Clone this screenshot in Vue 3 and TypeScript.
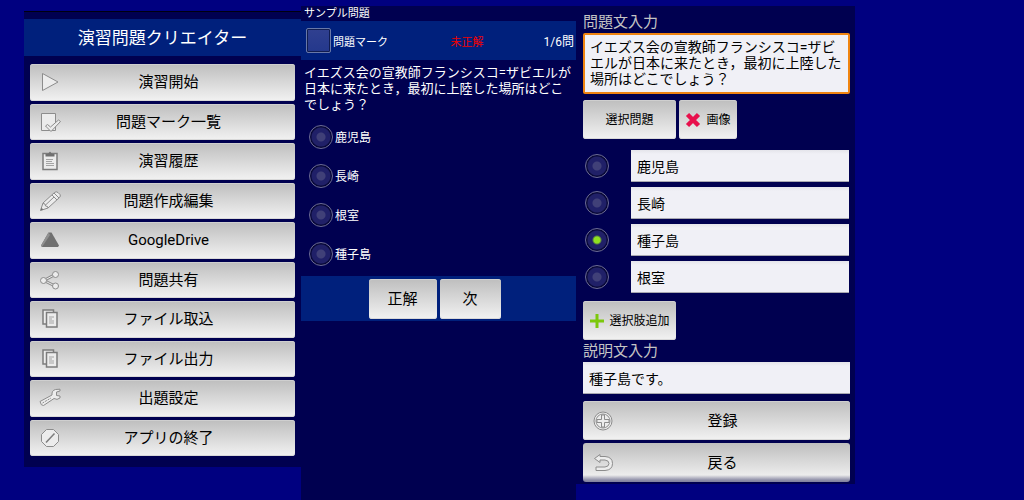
<script setup lang="ts">
import { ref } from 'vue'

interface MenuItem {
  label: string
  icon: string
}

const menu: MenuItem[] = [
  { label: '演習開始', icon: 'play' },
  { label: '問題マーク一覧', icon: 'mark' },
  { label: '演習履歴', icon: 'clipboard' },
  { label: '問題作成編集', icon: 'pencil' },
  { label: 'GoogleDrive', icon: 'drive' },
  { label: '問題共有', icon: 'share' },
  { label: 'ファイル取込', icon: 'files' },
  { label: 'ファイル出力', icon: 'files' },
  { label: '出題設定', icon: 'wrench' },
  { label: 'アプリの終了', icon: 'exit' },
]

const question = 'イエズス会の宣教師フランシスコ=ザビエルが日本に来たとき，最初に上陸した場所はどこでしょう？'
const answers: string[] = ['鹿児島', '長崎', '根室', '種子島']

const marked = ref(false)
const picked = ref<string | null>(null)
const draft = ref(question)
const choices = ref<string[]>(['鹿児島', '長崎', '種子島', '根室'])
const correct = ref(2)
const explanation = ref('種子島です。')
</script>

<template>
  <div class="page">
    <section class="panel menu">
      <h1 class="menu-title">演習問題クリエイター</h1>
      <nav class="menu-list">
        <button v-for="item in menu" :key="item.label" type="button" class="btn wide">
          <svg class="icon" viewBox="0 0 24 24" aria-hidden="true">
            <g v-if="item.icon === 'play'">
              <path class="light" d="M4.500 3.500V20.500L20 12Z" />
            </g>
            <g v-else-if="item.icon === 'mark'">
              <path class="light" d="M3.500 3.500H17.500V20.500H3.500Z" />
              <path class="light" d="M7.500 16l2-1.500 3 2.500L20.500 10l2 1.500L13 21.500Z" />
            </g>
            <g v-else-if="item.icon === 'clipboard'">
              <path class="light heavy" d="M5 4.500H19V20.500H5Z" />
              <path class="dark" d="M7.500 7.500V5H10L12 2.500l2 2.500h2.500V7.500Z" />
              <path class="thin" d="M8 10.500h7M8 12.500h6M8 14.500h8M8 16.500h8" />
            </g>
            <g v-else-if="item.icon === 'pencil'">
              <path class="light" d="M2.500 21.500L5 14 16.500 3.500Q18 2 20 3.500L22 5.500Q23 7 21.500 8.500L10 19Z" />
              <path class="line" d="M5 14.500L7 15l.5 2 2 .5.5 1.500M14 6l5 5M16 4l5 5M7.500 16L16 8" />
              <path class="dark" d="M2.500 21.500l1-2.800 1.800 1.800Z" />
            </g>
            <g v-else-if="item.icon === 'drive'">
              <path class="slab" d="M10.500 4.500H13.500L21 17.500 20 19H4L3 17.500Z" />
              <path class="shine" d="M10.500 4.500L3 17.500 4 19 12 7Z" />
            </g>
            <g v-else-if="item.icon === 'share'">
              <path class="rod" d="M6 12.500L17 6.500M6 12.500L17 18" />
              <path class="rod-in" d="M6 12.500L17 6.500M6 12.500L17 18" />
              <circle class="light" cx="5.500" cy="12.500" r="3" />
              <circle class="light" cx="17.500" cy="6.500" r="3" />
              <circle class="light" cx="17.500" cy="18" r="3" />
            </g>
            <g v-else-if="item.icon === 'files'">
              <path class="light heavy" d="M5 3H15.500V17H5Z" />
              <path class="light heavy" d="M8.500 5.500H19V20H8.500Z" />
              <path class="thin" d="M11 10h5M11 12h3M11 14h5M11 16h5" />
            </g>
            <g v-else-if="item.icon === 'wrench'">
              <path class="light" d="M2 15.500L14 9Q13.500 4.500 17.500 3.500L22 3.200V5L18.500 6V9.500L22 10V12Q19 14.500 16 12.500L5.500 19.500Q3 20 2 15.500Z" />
              <path class="line" d="M4.500 17L13 12" stroke-width="2" stroke-dasharray="2 1" />
            </g>
            <g v-else>
              <path class="light" d="M8.500 3.500h7l5 5v7l-5 5h-7l-5-5v-7Z" />
              <path class="line heavy" d="M8 16.500L16.500 7.500" />
            </g>
          </svg>
          <span>{{ item.label }}</span>
        </button>
      </nav>
    </section>

    <section class="panel quiz">
      <h2 class="quiz-title">サンプル問題</h2>
      <div class="quiz-bar">
        <label class="mark"><input v-model="marked" type="checkbox" class="check" />問題マーク</label>
        <span class="state">未正解</span>
        <span class="count">1/6問</span>
      </div>
      <p class="question">{{ question }}</p>
      <div class="answers">
        <label v-for="a in answers" :key="a" class="answer">
          <input v-model="picked" type="radio" name="answer" class="radio" :value="a" />
          <span class="answer-text">{{ a }}</span>
        </label>
      </div>
      <div class="quiz-actions">
        <button type="button" class="btn reveal">正解</button>
        <button type="button" class="btn next">次</button>
      </div>
    </section>

    <section class="panel editor">
      <label class="heading" for="draft">問題文入力</label>
      <textarea id="draft" v-model="draft" class="draft" rows="3"></textarea>
      <div class="tools">
        <button type="button" class="btn tool kind">選択問題</button>
        <button type="button" class="btn tool picture">
          <svg class="glyph" viewBox="0 0 16 16" aria-hidden="true">
            <path d="M2.500 2.500L13.500 13.500M13.500 2.500L2.500 13.500" stroke="#e8104c" stroke-width="4.500" />
          </svg>
          <span>画像</span>
        </button>
      </div>
      <div class="choices">
        <div v-for="(c, i) in choices" :key="i" class="choice">
          <input v-model="correct" type="radio" name="correct" class="radio" :value="i" :aria-label="'正解 ' + (i + 1)" />
          <input v-model="choices[i]" type="text" class="field" :aria-label="'選択肢 ' + (i + 1)" />
        </div>
      </div>
      <div class="adder">
        <button type="button" class="btn tool add">
          <svg class="glyph" viewBox="0 0 16 16" aria-hidden="true">
            <path d="M8 1V15M1 8H15" stroke="#7cc80c" stroke-width="3" />
          </svg>
          <span>選択肢追加</span>
        </button>
      </div>
      <label class="heading" for="explanation">説明文入力</label>
      <input id="explanation" v-model="explanation" type="text" class="field note" />
      <div class="submit">
        <button type="button" class="btn wide">
          <svg class="icon" viewBox="0 0 24 24" aria-hidden="true">
            <circle class="light" cx="12" cy="12" r="9" />
            <circle class="line" cx="12" cy="12" r="7" />
            <path class="light" d="M10.500 6h3v4.500H18v3h-4.500V18h-3v-4.500H6v-3h4.500Z" />
          </svg>
          <span>登録</span>
        </button>
        <button type="button" class="btn wide last">
          <svg class="icon" viewBox="0 0 24 24" aria-hidden="true">
            <path class="light" d="M3.500 7.500L9 3.500V5.500H14Q21.500 6 21.500 12.500T14 19.500H5V16H14Q18 15.500 18 12.500T14 9H9V11.500Z" />
          </svg>
          <span>戻る</span>
        </button>
      </div>
    </section>
  </div>
</template>

<style>
html,
body {
  background: #000080;
}
</style>

<style scoped>
.page {
  box-sizing: border-box;
  min-height: 100vh;
  padding: 6px 169px 0 24px;
  display: grid;
  grid-template-columns: 277fr 275fr 279fr;
  align-items: start;
  background: #000080;
  font-family: Roboto, "Noto Sans CJK JP", sans-serif;
  color: #fff;
}

.page * {
  box-sizing: border-box;
}

h1,
h2,
p {
  margin: 0;
  font-weight: 400;
}

button,
input,
textarea {
  margin: 0;
  font-family: inherit;
}

.panel {
  min-width: 0;
  background: #000050;
}

.btn {
  border: 0;
  border-radius: 3px;
  padding: 0;
  display: flex;
  align-items: center;
  justify-content: center;
  color: #000;
  background: linear-gradient(#bebebe, #f2f2f2);
  box-shadow: inset 0 1px 0 #cfcfcf, inset 0 -1px 0 #d8d8d8;
  font-size: 15px;
  line-height: 20px;
}

.wide {
  position: relative;
  width: 100%;
  padding-left: 12px;
}

.icon {
  position: absolute;
  left: 8px;
  width: 24px;
  height: 24px;
}

.light {
  fill: #ececec;
  stroke: #8c8c8c;
  stroke-width: 1;
}

.line,
.thin {
  fill: none;
  stroke: #8c8c8c;
  stroke-width: 1;
}

.thin {
  stroke: #a4a4a4;
}

.heavy {
  stroke: #7c7c7c;
  stroke-width: 1.5;
}

.dark {
  fill: #707070;
}

.slab {
  fill: #707070;
}

.shine {
  fill: #909090;
}

.rod {
  stroke: #8c8c8c;
  stroke-width: 3;
}

.rod-in {
  stroke: #ececec;
  stroke-width: 1;
}

/* menu */
.menu {
  margin-top: 5px;
  padding: 7px 0 11px;
  border-top: 1px solid #000010;
}

.menu-title {
  padding: 7px 0 5px;
  background: #00207c;
  font-size: 17px;
  line-height: 25px;
  text-align: center;
}

.menu-list {
  min-height: 392px;
  margin: 8px 6px 0;
  display: grid;
  grid-auto-rows: 1fr;
  gap: 3px;
}

/* quiz */
.quiz {
  min-height: calc(100vh - 6px);
}

.quiz-title {
  padding: 1px 3px 0;
  font-size: 11px;
  line-height: 14px;
}

.quiz-bar {
  height: 39px;
  padding: 0 2px 0 5px;
  display: grid;
  grid-template-columns: 1fr auto 1fr;
  align-items: center;
  background: #00207c;
  font-size: 11px;
}

.mark {
  display: flex;
  align-items: center;
  gap: 2px;
}

.state {
  padding-left: 54px;
  color: #f00000;
}

.count {
  text-align: right;
  font-size: 12px;
}

.check {
  appearance: none;
  width: 25px;
  height: 25px;
  border: 1px solid #6878a8;
  border-radius: 2px;
  background: linear-gradient(#304090, #24388c);
  box-shadow: inset 0 0 0 1px #101c50;
}

.question {
  padding: 5px 3px 0;
  font-size: 13px;
  line-height: 16px;
}

.answers {
  padding: 12px 8px 10px;
  display: grid;
  gap: 15px;
}

.answer {
  display: flex;
  align-items: center;
  gap: 2px;
  font-size: 12px;
  line-height: 22px;
}

.answer-text {
  padding-top: 2px;
}

.radio {
  appearance: none;
  flex: none;
  width: 24px;
  height: 24px;
  border: 1px solid #6c6c94;
  border-radius: 50%;
  background: radial-gradient(circle, #404078 0 4px, #202068 5px 9px, #080838 10px);
}

.radio:checked {
  background: radial-gradient(circle, #90e020 0 3px, #202068 5px 9px, #080838 10px);
}

.quiz-actions {
  padding: 3px 8px 2px 0;
  display: flex;
  justify-content: center;
  gap: 3px;
  background: #00207c;
}

.quiz-actions .btn {
  height: 40px;
}

.reveal {
  width: 68px;
}

.next {
  width: 61px;
}

/* editor */
.editor {
  padding: 5px 5px 2px 7px;
}

.heading {
  display: block;
  color: #c4c4c4;
  font-size: 15px;
  line-height: 22px;
}

.draft {
  display: block;
  width: 100%;
  height: 61px;
  padding: 4px 5px;
  border: 2px solid #f08410;
  border-radius: 2px;
  outline: 0;
  resize: none;
  overflow: hidden;
  background: #f0f0f6;
  color: #000;
  font-size: 14px;
  line-height: 16px;
}

.tools {
  margin-top: 6px;
  display: flex;
  gap: 3px;
}

.tool {
  height: 39px;
  font-size: 12px;
}

.kind,
.add {
  width: 93px;
}

.picture {
  width: 58px;
  gap: 5px;
}

.add {
  gap: 4px;
}

.glyph {
  flex: none;
  width: 16px;
  height: 16px;
}

.choices {
  margin: 11px 1px 0 2px;
  display: grid;
  gap: 5px;
}

.choice {
  display: flex;
  align-items: center;
  gap: 22px;
}

.field {
  min-width: 0;
  width: 100%;
  height: 32px;
  padding: 0 6px;
  border: 0;
  border-bottom: 1px solid #a8a8b0;
  border-radius: 0;
  outline: 0;
  background: linear-gradient(#e4e4ea, #f0f0f6 4px);
  color: #000;
  font-size: 14px;
}

.adder {
  margin-top: 8px;
}

.note {
  display: block;
}

.submit {
  margin-top: 7px;
  display: grid;
  gap: 3px;
}

.submit .btn {
  height: 39px;
}

.submit .last {
  background: linear-gradient(#bebebe, #ececec 32px, #9090a8 37px, #8080a0);
  box-shadow: none;
}
</style>
